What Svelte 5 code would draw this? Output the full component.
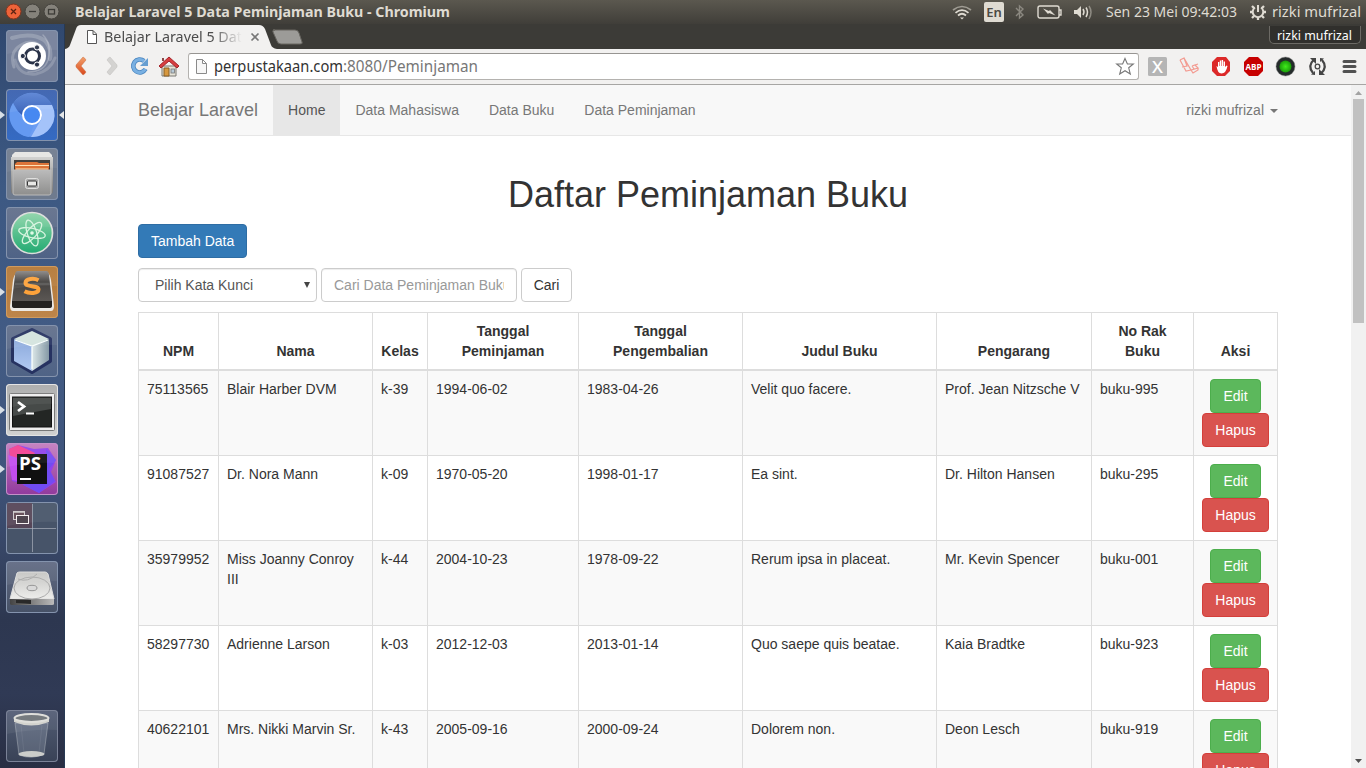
<script>
  const menu = [
    { label: 'Home', active: true },
    { label: 'Data Mahasiswa' },
    { label: 'Data Buku' },
    { label: 'Data Peminjaman' }
  ];
  const columns = [
    ['NPM', 80], ['Nama', 154], ['Kelas', 55], ['Tanggal Peminjaman', 151],
    ['Tanggal Pengembalian', 164], ['Judul Buku', 194], ['Pengarang', 155],
    ['No Rak Buku', 102], ['Aksi', 84]
  ];
  const rows = [
    ['75113565', 'Blair Harber DVM', 'k-39', '1994-06-02', '1983-04-26', 'Velit quo facere.', 'Prof. Jean Nitzsche V', 'buku-995'],
    ['91087527', 'Dr. Nora Mann', 'k-09', '1970-05-20', '1998-01-17', 'Ea sint.', 'Dr. Hilton Hansen', 'buku-295'],
    ['35979952', 'Miss Joanny Conroy III', 'k-44', '2004-10-23', '1978-09-22', 'Rerum ipsa in placeat.', 'Mr. Kevin Spencer', 'buku-001'],
    ['58297730', 'Adrienne Larson', 'k-03', '2012-12-03', '2013-01-14', 'Quo saepe quis beatae.', 'Kaia Bradtke', 'buku-923'],
    ['40622101', 'Mrs. Nikki Marvin Sr.', 'k-43', '2005-09-16', '2000-09-24', 'Dolorem non.', 'Deon Lesch', 'buku-919']
  ];
  const launchers = [
    { name: 'dash', icon: dash },
    { name: 'chromium', icon: chromium, running: true, focused: true },
    { name: 'files', icon: files },
    { name: 'atom', icon: atom },
    { name: 'sublime', icon: sublime, running: true },
    { name: 'netbeans', icon: cube },
    { name: 'terminal', icon: terminal, running: true },
    { name: 'phpstorm', icon: phpstorm, running: true },
    { name: 'workspace', icon: workspace },
    { name: 'disk', icon: disk },
    { name: 'trash', icon: trash }
  ];
</script>

{#snippet fit(text, width, size, fill, weight = 400)}
  <svg class="fit" {width} height="20"><text x="0" y="15" font-size={size} {fill} font-weight={weight} textLength={width} lengthAdjust="spacingAndGlyphs">{text}</text></svg>
{/snippet}

{#snippet dash()}
  <g fill="none" stroke="#fff" stroke-linecap="round">
    <path d="M6 8Q26 2 38 10Q46 17 44 29" stroke-opacity=".2" stroke-width="4" />
    <path d="M8 37Q3 22 15 15Q26 8 36 17" stroke-opacity=".22" stroke-width="3" />
    <path d="M9 30Q13 46 30 44Q44 41 49 28" stroke-opacity=".18" stroke-width="3" />
    <path d="M37 5Q46 14 42 30Q38 42 22 42" stroke-opacity=".25" stroke-width="1.5" />
  </g>
  <circle cx="26" cy="26" r="14" fill="#fff" />
  <circle cx="26.500" cy="26" r="7" fill="none" stroke="#293248" stroke-width="3" />
  <g stroke="#fff" stroke-width="1"><circle cx="16.800" cy="26" r="2.600" fill="#293248" /><circle cx="31" cy="17.400" r="2.600" fill="#293248" /><circle cx="31" cy="34.600" r="2.600" fill="#293248" /></g>
{/snippet}

{#snippet chromium()}
  <circle cx="26" cy="26" r="22" fill="#6c9df2" />
  <path d="M6 17A22 22 0 0 1 46 16H26Q17 17 16 26Z" fill="url(#chromeTop)" />
  <path d="M46 16A22 22 0 0 1 25 48L36 29Q36 20 29 16Z" fill="#a4c3fa" />
  <path d="M7 14L17 31Q21 37 28 36L23 48A22 22 0 0 1 7 14Z" fill="#6499f1" />
  <circle cx="26" cy="26" r="9" fill="#4688f1" stroke="#fff" stroke-width="2" />
{/snippet}

{#snippet files()}
  <path d="M6 7L9 4H43L46 7V13H6Z" fill="#e5e5e3" />
  <path d="M5 9H47V43Q47 46 44 46H8Q5 46 5 43Z" fill="url(#metal)" />
  <path d="M8 12H44V23H8Z" fill="#383431" />
  <path d="M11 14H31L33 15H43V22H9V16Z" fill="#db6c2d" />
  <path d="M9 17.500H43M10 21H42" stroke="#ffe0b1" stroke-width="1.200" />
  <path d="M7 22H45V45Q45 47 43 47H9Q7 47 7 45Z" fill="url(#drawer)" stroke="#bbb" />
  <rect x="19.500" y="30.500" width="13" height="10" rx="2" fill="#aaa" stroke="#e0e0df" />
  <rect x="21.500" y="33" width="9" height="5" rx="1" fill="#e8e8e6" stroke="#353535" />
{/snippet}

{#snippet atom()}
  <circle cx="26" cy="26" r="20.500" fill="url(#atomGreen)" stroke="#dcdedc" stroke-width="1.700" />
  <g fill="none" stroke="#d6f4df" stroke-width="1.300">
    <ellipse cx="26" cy="26" rx="13.500" ry="4.700" transform="rotate(12 26 26)" />
    <ellipse cx="26" cy="26" rx="13.500" ry="4.700" transform="rotate(72 26 26)" />
    <ellipse cx="26" cy="26" rx="13.500" ry="4.700" transform="rotate(132 26 26)" />
  </g>
  <circle cx="26" cy="26" r="1.800" fill="#e0fae6" />
{/snippet}

{#snippet sublime()}
  <path d="M4 40L7 14Q8 8 12 6H41Q44 8 45 14L48 40Q48 45 45 45H7Q4 45 4 40Z" fill="#ebe8e4" />
  <path d="M6 35H46V40Q46 42 43 42H9Q6 42 6 40Z" fill="#24211f" />
  <path d="M6 35L9 9Q9 5 12 5H40Q43 5 43 9L46 35Z" fill="url(#keyDark)" />
  <path d="M9 18H44" stroke="#888" stroke-opacity=".5" />
  <path d="M32.500 14.200C28 11.800 19.500 12.600 19.500 16.900C19.500 21.500 32.500 18.900 32.500 23.600C32.500 27.500 23.500 28 18.500 25.300" fill="none" stroke="#fda23a" stroke-width="4" />
{/snippet}

{#snippet cube()}
  <path d="M26 5L44 14V36L26 47L7 36V14Z" fill="#c5dced" stroke="#263261" stroke-width="4" stroke-linejoin="round" />
  <path d="M26 6L43 14L26 21L8 14Z" fill="#d4e4df" />
  <path d="M8 14L26 21V46L8 36Z" fill="url(#cubeLeft)" />
  <path d="M26 21L43 14V35L26 46Z" fill="url(#cubeRight)" />
  <path d="M9 15L26 21L42 15M26 22V44" fill="none" stroke="#fafffd" stroke-width="1.300" />
{/snippet}

{#snippet terminal()}
  <rect x="3.500" y="9.500" width="45" height="37" rx="1" fill="#eee" stroke="#777" />
  <rect x="6.500" y="13" width="39" height="30" fill="#232624" stroke="#111" />
  <path d="M7 14H45V25L7 32Z" fill="#464a48" />
  <path d="M12 18L18 22.500L12 27" fill="none" stroke="#fff" stroke-width="2.800" /><path d="M20 29.500H28" stroke="#fff" stroke-width="2" />
{/snippet}

{#snippet phpstorm()}
  <path d="M3 6L12 2L28 6L42 5L50 17L45 29L50 39L33 50L14 40L6 38Z" fill="#9043eb" />
  <path d="M3 6L12 2L29 10L15 27L5 22Z" fill="#f34192" /><path d="M2 12L12 15L17 39L6 37Z" fill="#c34dee" /><path d="M40 6L50 17L43 26L49 38L33 50L17 42L40 35Z" fill="#714cf2" />
  <rect x="11" y="11" width="30" height="30" fill="#101010" />
  <text x="13" y="27" font-family="Open Sans, sans-serif" font-weight="700" font-size="17" fill="#fff" textLength="22" lengthAdjust="spacingAndGlyphs">PS</text>
  <path d="M14 36H25" stroke="#fff" stroke-width="2" />
{/snippet}

{#snippet workspace()}
  <rect x="1" y="1" width="25" height="25" fill="#5c4050" opacity=".72" />
  <path d="M26.500 2V50M2 26.500H50" stroke="#b1b6c1" stroke-opacity=".65" />
  <rect x="7.500" y="9.500" width="11" height="8" fill="#604852" stroke="#ccc8ca" /><path d="M7 10H19M10 14H23" stroke="#ccc8ca" stroke-width="1.500" /><rect x="10.500" y="13.500" width="12" height="8" fill="#443a44" stroke="#f5eff1" />
{/snippet}

{#snippet disk()}
  <path d="M4 38L11 12Q12 11 14 11H39Q41 11 42 13L48 38Z" fill="url(#diskTop)" stroke="#ddd" />
  <path d="M4 38H48V43Q48 44 46 44H5L4 43Z" fill="url(#diskSide)" /><path d="M10 39H25V43L10 42Z" fill="#292929" />
  <ellipse cx="26" cy="27" rx="18" ry="11" fill="none" stroke="#aaa" /><ellipse cx="26" cy="27" rx="5" ry="2.700" fill="#d9d9d9" stroke="#969696" /><path d="M12 18Q22 22 31 13" fill="none" stroke="#aaa" />
{/snippet}

{#snippet trash()}
  <path d="M9 13H42L38 44Q26 50 13 45Z" fill="#d9e5ed" fill-opacity=".18" stroke="#c5cbd0" stroke-opacity=".4" />
  <path d="M15 15L18 43M36 15L33 43" stroke="#e4eaf0" stroke-opacity=".08" />
  <ellipse cx="25.500" cy="44" rx="13" ry="3" fill="#cbcdca" />
  <path d="M8 8V12Q25 19 43 12V8Z" fill="#d2d2cd" />
  <ellipse cx="25.500" cy="8" rx="17" ry="4" fill="#6e7378" stroke="#deded9" stroke-width="2" />
{/snippet}

<svg width="0" height="0" class="defs">
  <defs>
    <linearGradient id="chromeTop" x2="0" y2="1"><stop stop-color="#5983d5" /><stop offset="1" stop-color="#305cb5" /></linearGradient>
    <linearGradient id="metal" x2="0" y2="1"><stop stop-color="#cfcfcd" /><stop offset="1" stop-color="#777" /></linearGradient>
    <linearGradient id="drawer" x2="0" y2="1"><stop stop-color="#bbb" /><stop offset="1" stop-color="#8e8e8d" /></linearGradient>
    <linearGradient id="atomGreen" x2="0" y2="1"><stop stop-color="#8ed5a9" /><stop offset="1" stop-color="#22aa72" /></linearGradient>
    <linearGradient id="keyDark" x2="0" y2="1"><stop stop-color="#8a8684" /><stop offset=".35" stop-color="#454240" /><stop offset="1" stop-color="#5b5754" /></linearGradient>
    <linearGradient id="cubeLeft" x2="0" y2="1"><stop stop-color="#8ba9db" /><stop offset="1" stop-color="#b2caf3" /></linearGradient>
    <linearGradient id="cubeRight"><stop stop-color="#dce7e8" /><stop offset="1" stop-color="#8498a5" /></linearGradient>
    <linearGradient id="diskTop" x2="0" y2="1"><stop stop-color="#c5c5c3" /><stop offset="1" stop-color="#ededeb" /></linearGradient>
    <linearGradient id="diskSide"><stop stop-color="#444" /><stop offset="1" stop-color="#bbb" /></linearGradient>
    <linearGradient id="backArrow" x2="0" y2="1"><stop stop-color="#f3a16c" /><stop offset="1" stop-color="#d9481c" /></linearGradient>
    <radialGradient id="led"><stop stop-color="#40eb1c" /><stop offset="1" stop-color="#1a9c09" /></radialGradient>
  </defs>
</svg>

<div class="desktop">
  <header class="panel">
    <svg width="75" height="24">
      <circle cx="13.500" cy="11.500" r="7.500" fill="#ed6339" stroke="#86341d" /><path d="M11 9L16 14M16 9L11 14" stroke="#5b2312" stroke-width="1.300" />
      <g fill="#85827b" stroke="#44423d"><circle cx="32.500" cy="11.500" r="7.500" /><circle cx="51.500" cy="11.500" r="7.500" /></g>
      <path d="M29 11.500H36" stroke="#3c3b37" stroke-width="1.300" /><rect x="48.500" y="9.500" width="6" height="4.500" fill="none" stroke="#3c3b37" stroke-width="1.300" />
    </svg>
    {@render fit('Belajar Laravel 5 Data Peminjaman Buku - Chromium', 375, 14.5, '#dfdbd2', 700)}
    <div class="indicators">
      <svg width="20" height="20" fill="none" stroke="#dfdbd2" stroke-width="1.700"><path d="M1 8Q10 1 19 8" stroke-opacity=".55" /><path d="M3.500 10.800Q10 5.500 16.500 10.800M6 13.500Q10 10 14 13.500" /><path d="M8 15.500H12L10 17.500Z" fill="#dfdbd2" stroke="none" /></svg>
      <span class="language">En</span>
      <svg width="12" height="20" fill="none" stroke="#8b8880" stroke-width="1.400"><path d="M2 6L9 13L5.500 16V4L9 7L2 14" /></svg>
      <svg width="26" height="20" fill="none" stroke="#dfdbd2" stroke-width="1.400"><rect x="1" y="4" width="21" height="12" rx="2" /><path d="M22 8H24V13H22" /><path d="M6 6.500L12 9L13 8L18.500 13.500L12 11L11 12Z" fill="#dfdbd2" stroke="none" /></svg>
      <svg width="20" height="20" fill="none" stroke="#dfdbd2" stroke-width="1.500"><path d="M1 8H4L8 4V16L4 12H1Z" fill="#dfdbd2" stroke="none" /><path d="M10 7Q12 10 10 13M13 5.500Q16 10 13 15" /><path d="M16 4Q20 10 16 17" stroke-opacity=".45" /></svg>
      {@render fit('Sen 23 Mei 09:42:03', 131, 14.5, '#dfdbd2')}
      <svg width="18" height="20" fill="none" stroke="#dfdbd2"><path d="M6 5.500A5.300 5.300 0 1 0 12 5.500" stroke-width="2" /><path d="M9 3V10" stroke-width="2" /><path d="M3 4L5 6M15 4L13 6M1 10H4M17 10H14M3 16L5 14M15 16L13 14M9 15V18" stroke-width="2.300" /></svg>
      {@render fit('rizki mufrizal', 89, 14.5, '#dfdbd2')}
    </div>
  </header>

  <div class="body">
    <nav class="launcher">
      {#each launchers as item}
        <div class="tile {item.name}">
          {#if item.running}<i class="running"></i>{/if}
          {#if item.focused}<i class="focused"></i>{/if}
          <svg width="52" height="52" viewBox="0 0 52 52">{@render item.icon()}<path d="M3 1H49Q51 1 51 3V20Q26 19 1 24V3Q1 1 3 1Z" fill="#fff" opacity=".06" /></svg>
        </div>
      {/each}
    </nav>

    <section class="browser">
      <div class="tabs">
        <div class="tab">
          <svg class="tab-shape" width="242" height="25"><path d="M0 25Q4 24 5 21L11 5Q12 1 16 1H194Q198 1 200 5L206 21Q207 24 212 25Z" fill="#f2f1f0" /><path d="M208 6H230Q233 6 234 9L237 18Q238 20 235 20H216Q213 20 212 17L208 8Q207 6 210 6Z" fill="#9c9b98" stroke="#686661" /></svg>
          <svg class="page-icon" width="12" height="16"><path d="M1.500 1.500H7L10.500 5V14.500H1.500ZM7 1.500V5.500H10.500" fill="#fff" stroke="#555" /></svg>
          <div class="tab-title">{@render fit('Belajar Laravel 5 Data', 146, 14.5, '#4c4c4c')}</div>
          <svg class="close" width="10" height="10"><path d="M1.500 1.500L8.500 8.500M8.500 1.500L1.500 8.500" stroke="#777" stroke-width="1.700" /></svg>
        </div>
        <div class="user-badge">{@render fit('rizki mufrizal', 75, 13, '#fff')}</div>
      </div>
      <div class="toolbar">
        <svg class="controls" width="123" height="36">
          <path d="M18 8Q20 9 21 11L16 17L21 23Q20 25 18 26L11 18V16Z" fill="url(#backArrow)" stroke="#c76d40" stroke-width=".5" />
          <path d="M45 8Q43 9 42 11L47 17L42 23Q43 25 45 26L52 18V16Z" fill="#d4d3d1" stroke="#bfbdba" stroke-width=".5" />
          <path d="M79 12A6.500 6.500 0 1 0 80.500 20" fill="none" stroke="#4884be" stroke-width="4.600" /><path d="M79 12A6.500 6.500 0 1 0 80.500 20" fill="none" stroke="#79b0e2" stroke-width="3" /><path d="M83 9V17H75Z" fill="#669ed1" />
          <path d="M97 17H111V27H97Z" fill="#e7e4d8" stroke="#797872" /><path d="M99 19H104V27H99Z" fill="#d7983e" stroke="#865f26" /><rect x="106" y="20" width="3.500" height="4" fill="#b7cad8" stroke="#777" stroke-width=".8" /><path d="M94 17L104 8L114 17L112 19L104 12L96 19Z" fill="#d83e40" stroke="#a5252b" /><path d="M98 9V12" stroke="#8c4646" stroke-width="2" />
        </svg>
        <div class="address">
          <svg width="13" height="17"><path d="M1.500 1.500H7.500L11.500 5.500V15.500H1.500ZM7.500 1.500V5.500H11.500" fill="#f7f7f7" stroke="#8a8a8a" /></svg>
          <div class="url">{@render fit('perpustakaan.com', 129, 16, '#333')}{@render fit(':8080/Peminjaman', 135, 16, '#777')}</div>
          <svg class="star" width="20" height="19"><path d="M10 1.500L12.400 7H18.300L13.700 10.800L15.300 17L10 13.700L4.700 17L6.300 10.800L1.700 7H7.600Z" fill="#fff" stroke="#777" stroke-width="1.100" /></svg>
        </div>
        <svg class="extensions" width="227" height="36">
          <rect x="9" y="8" width="19" height="19" rx="1.500" fill="#b5b5b5" /><text x="13" y="23.500" font-family="Noto Sans" font-size="17" font-weight="500" fill="#fff" textLength="11" lengthAdjust="spacingAndGlyphs">X</text>
          <path d="M41 11L45 9L52 21L59 19L56 16L53 17M41 11L47 22L52 21M45 9L48 17L43 18M52 21L54 24L59 21V19M53 17L55 20M56 16L59 15" fill="none" stroke="#f39b91" stroke-width="1.200" />
          <path d="M78 8H87L91 13V22L86 27H78L73 22V13Z" fill="#dc2929" /><path d="M77.500 17L79 18V13H80.300V17H80.800V11.500H82.200V17H82.700V11H84.100V17H84.600V12.500H86V18L87.500 16.500L88.500 17Q87 24.500 82.500 24.500Q78.500 24.500 77.500 17Z" fill="#fff" />
          <path d="M110 8H119L124 13V22L119 27H110L105 22V13Z" fill="#c70000" /><text x="106.500" y="21" font-family="Open Sans" font-weight="700" font-size="9.500" fill="#fff" textLength="16" lengthAdjust="spacingAndGlyphs">ABP</text>
          <circle cx="146.500" cy="17.500" r="9.500" fill="#252b2b" stroke="#858585" stroke-width=".5" /><circle cx="146.500" cy="17.500" r="6" fill="url(#led)" />
          <path d="M175 10.500Q168 17 174 24M182 24.500Q189 18 183 11" fill="none" stroke="#454545" stroke-width="2.200" /><path d="M171 9H177V15ZM186 26H180V20ZM172 25.500L176 26V22ZM185 9.500L181 9V13Z" fill="#454545" /><circle cx="178.500" cy="17.500" r="2.300" fill="none" stroke="#454545" stroke-width="1.300" />
          <path d="M205 12.500H216M205 17.500H216M205 22.500H216" stroke="#515151" stroke-width="3" stroke-linecap="round" />
        </svg>
      </div>
      <div class="viewport">
        <main>
          <div class="navbar"><div class="container nav-inner">
            <span class="brand">Belajar Laravel</span>
            {#each menu as item}<span class="nav-item" class:active={item.active}>{item.label}</span>{/each}
            <span class="account">rizki mufrizal <i></i></span>
          </div></div>
          <div class="container content">
            <h1>Daftar Peminjaman Buku</h1>
            <button class="btn primary">Tambah Data</button>
            <div class="search">
              <div class="select"><span>Pilih Kata Kunci</span><svg width="8" height="8"><path d="M1 1H7L4 7Z" fill="#444" /></svg></div>
              <div class="input"><span>Cari Data Peminjaman Buku</span></div>
              <button class="btn find">Cari</button>
            </div>
            <table>
              <colgroup>{#each columns as column}<col style="width: {column[1]}px" />{/each}</colgroup>
              <thead><tr>{#each columns as column}<th>{column[0]}</th>{/each}</tr></thead>
              <tbody>
                {#each rows as row}
                  <tr>{#each row as value}<td>{value}</td>{/each}<td><div class="actions"><button class="btn success">Edit</button><button class="btn danger">Hapus</button></div></td></tr>
                {/each}
              </tbody>
            </table>
          </div>
        </main>
        <aside class="scrollbar"><svg width="15" height="14"><path d="M4 10H11L7.500 6Z" fill="#a3a3a3" /></svg><div class="thumb"></div><svg class="down" width="15" height="14"><path d="M4 5H11L7.500 9Z" fill="#505050" /></svg></aside>
      </div>
    </section>
  </div>
</div>

<style>
  :global(body) { margin: 0; overflow: hidden; }
  * { box-sizing: border-box; }
  svg { display: block; flex-shrink: 0; }
  .defs { position: absolute; }
  .desktop { width: 1366px; height: 768px; overflow: hidden; display: flex; flex-direction: column; font: 14px/20px "Liberation Sans", Arial, sans-serif; color: #333; }
  .panel { height: 24px; flex: none; display: flex; background: linear-gradient(#5b584f, #403e39); }
  .fit { font-family: "Noto Sans", sans-serif; overflow: visible; }
  .panel > .fit { margin-top: 2px; }
  .indicators { margin-left: auto; padding: 2px 5px 0 0; display: flex; }
  .indicators > svg:first-child { margin-right: 12px; }
  .language { width: 20px; height: 20px; border-radius: 2px; background: #dfdbd2; color: #4c4a44; font: 600 13px/20px "Noto Sans", sans-serif; text-align: center; margin-right: 10px; }
  .language + svg { margin-right: 11px; }
  .language + svg + svg { margin-right: 10px; }
  .language + svg + svg + svg { margin-right: 13px; }
  .indicators > .fit { margin-right: 12px; }
  .indicators > .fit:last-child { margin-right: 0; margin-left: 5px; }
  .body { flex: 1; min-height: 0; display: flex; }
  .launcher { width: 65px; flex: none; display: flex; flex-direction: column; gap: 7px; padding: 6px 0 6px 6px; border-right: 1px solid #273953; background: linear-gradient(#30486f, #3d5983 22%, #425b84 44%, #3f547b 60%, #364463 72%, #2d3750 80%, #303a55 90%, #292e43); }
  .tile { position: relative; width: 52px; height: 52px; flex: none; border-radius: 4px; background: linear-gradient(#616f8b, #4f6386); box-shadow: inset 0 0 0 1px #8493ad; }
  .dash { background: #747f99; }
  .chromium { background: linear-gradient(#395fae, #356bc3); }
  .files { background: #6f7b8e; }
  .sublime { background: linear-gradient(#b37836, #bd854b); box-shadow: inset 0 0 0 1px #d09b5e; }
  .terminal { background: linear-gradient(#a9aaaa, #d2d2d1); box-shadow: inset 0 0 0 1px #e4e4e4; }
  .phpstorm { background: linear-gradient(#c47dbf, #913a9d); box-shadow: inset 0 0 0 1px #c490c7; }
  .workspace { background: #475469; }
  .disk { background: linear-gradient(#606a83, #465166); }
  .trash { margin-top: auto; background: linear-gradient(#535d75, #394256); box-shadow: inset 0 0 0 1px #7b8297; }
  .running, .focused { position: absolute; top: 22px; border: solid transparent; border-width: 4px 0 4px 5px; }
  .running { left: -6px; border-left-color: #d8dfe6; }
  .focused { right: -6px; border-width: 4px 5px 4px 0; border-right-color: #e5e7e9; }
  .browser { flex: 1; min-width: 0; display: flex; flex-direction: column; }
  .tabs { height: 25px; flex: none; display: flex; justify-content: space-between; background: #3c3b37; }
  .tab { position: relative; width: 242px; height: 25px; display: flex; padding-left: 21px; }
  .tab-shape { position: absolute; left: 0; top: 0; }
  .page-icon { position: relative; margin: 5px 6px 0 0; }
  .tab-title { position: relative; width: 138px; margin-top: 3px; overflow: hidden; mask-image: linear-gradient(90deg, #000 78%, transparent 100%); }
  .close { position: relative; margin: 8px 0 0 8px; }
  .user-badge { width: 92px; height: 18px; margin: 2px 5px 0 0; padding-left: 7px; border: 1px solid #6c6a65; border-top: 0; border-radius: 0 0 5px 5px; background: #302f2c; }
  .user-badge .fit { margin-top: -1px; }
  .toolbar { height: 36px; flex: none; display: flex; background: #f2f1f0; border-bottom: 1px solid #a7a6a4; }
  .address { width: 951px; height: 27px; margin-top: 4px; display: flex; align-items: center; padding-left: 6px; background: #fff; border: 1px solid #b4b2af; border-top-color: #979592; border-radius: 3px; }
  .url { display: flex; margin: 0 0 0 6px; }
  .star { margin: 0 3px 0 auto; }
  .viewport { flex: 1; min-height: 0; display: flex; background: #fff; }
  main { flex: 1; overflow: hidden; }
  .container { width: 1140px; margin: 0 auto; }
  .navbar { height: 51px; background: #f8f8f8; border-bottom: 1px solid #e7e7e7; }
  .nav-inner { display: flex; line-height: 20px; color: #777; }
  .brand { padding: 15px 15px 15px 0; font-size: 18px; }
  .nav-item { padding: 15px; }
  .active { background: #e7e7e7; color: #555; }
  .account { margin-left: auto; padding: 15px 0; display: flex; align-items: center; }
  .account i { margin: 1px 0 0 6px; border: 4px solid transparent; border-top-color: #777; border-bottom: 0; }
  .content { padding-top: 39px; }
  h1 { height: 39px; margin: 0 0 10px; font-size: 36px; line-height: 39px; font-weight: 400; text-align: center; }
  .btn { display: block; height: 34px; padding: 6px 12px; border: 1px solid #ccc; border-radius: 4px; background: #fff; color: #333; font: 14px/20px "Liberation Sans", Arial, sans-serif; white-space: nowrap; }
  .primary { background: #337ab7; border-color: #2e6da4; color: #fff; }
  .success { width: 51px; background: #5cb85c; border-color: #4cae4c; color: #fff; }
  .danger { width: 67px; background: #d9534f; border-color: #d43f3a; color: #fff; }
  .find { width: 51px; padding: 6px 0; }
  .search { display: flex; gap: 4px; margin: 10px 0; }
  .select, .input { height: 34px; border: 1px solid #ccc; border-radius: 4px; box-shadow: inset 0 1px 1px rgba(0, 0, 0, .075); padding: 6px 12px; color: #555; }
  .select { width: 179px; padding: 6px 5px 6px 16px; display: flex; align-items: center; justify-content: space-between; }
  .input { width: 196px; color: #999; }
  .input span { display: block; overflow: hidden; white-space: nowrap; }
  table { width: 1139px; table-layout: fixed; border-collapse: collapse; }
  th, td { padding: 8px; border: 1px solid #ddd; vertical-align: top; line-height: 20px; }
  th { vertical-align: bottom; border-bottom-width: 2px; text-align: center; }
  tbody tr { height: 85px; }
  tbody tr:nth-child(odd) { background: #f9f9f9; }
  .actions { display: flex; flex-direction: column; align-items: center; }
  .scrollbar { width: 15px; background: #f1f1f1; display: flex; flex-direction: column; align-items: center; }
  .thumb { width: 11px; height: 224px; background: #c1c1c1; }
  .down { margin-top: auto; }
</style>
